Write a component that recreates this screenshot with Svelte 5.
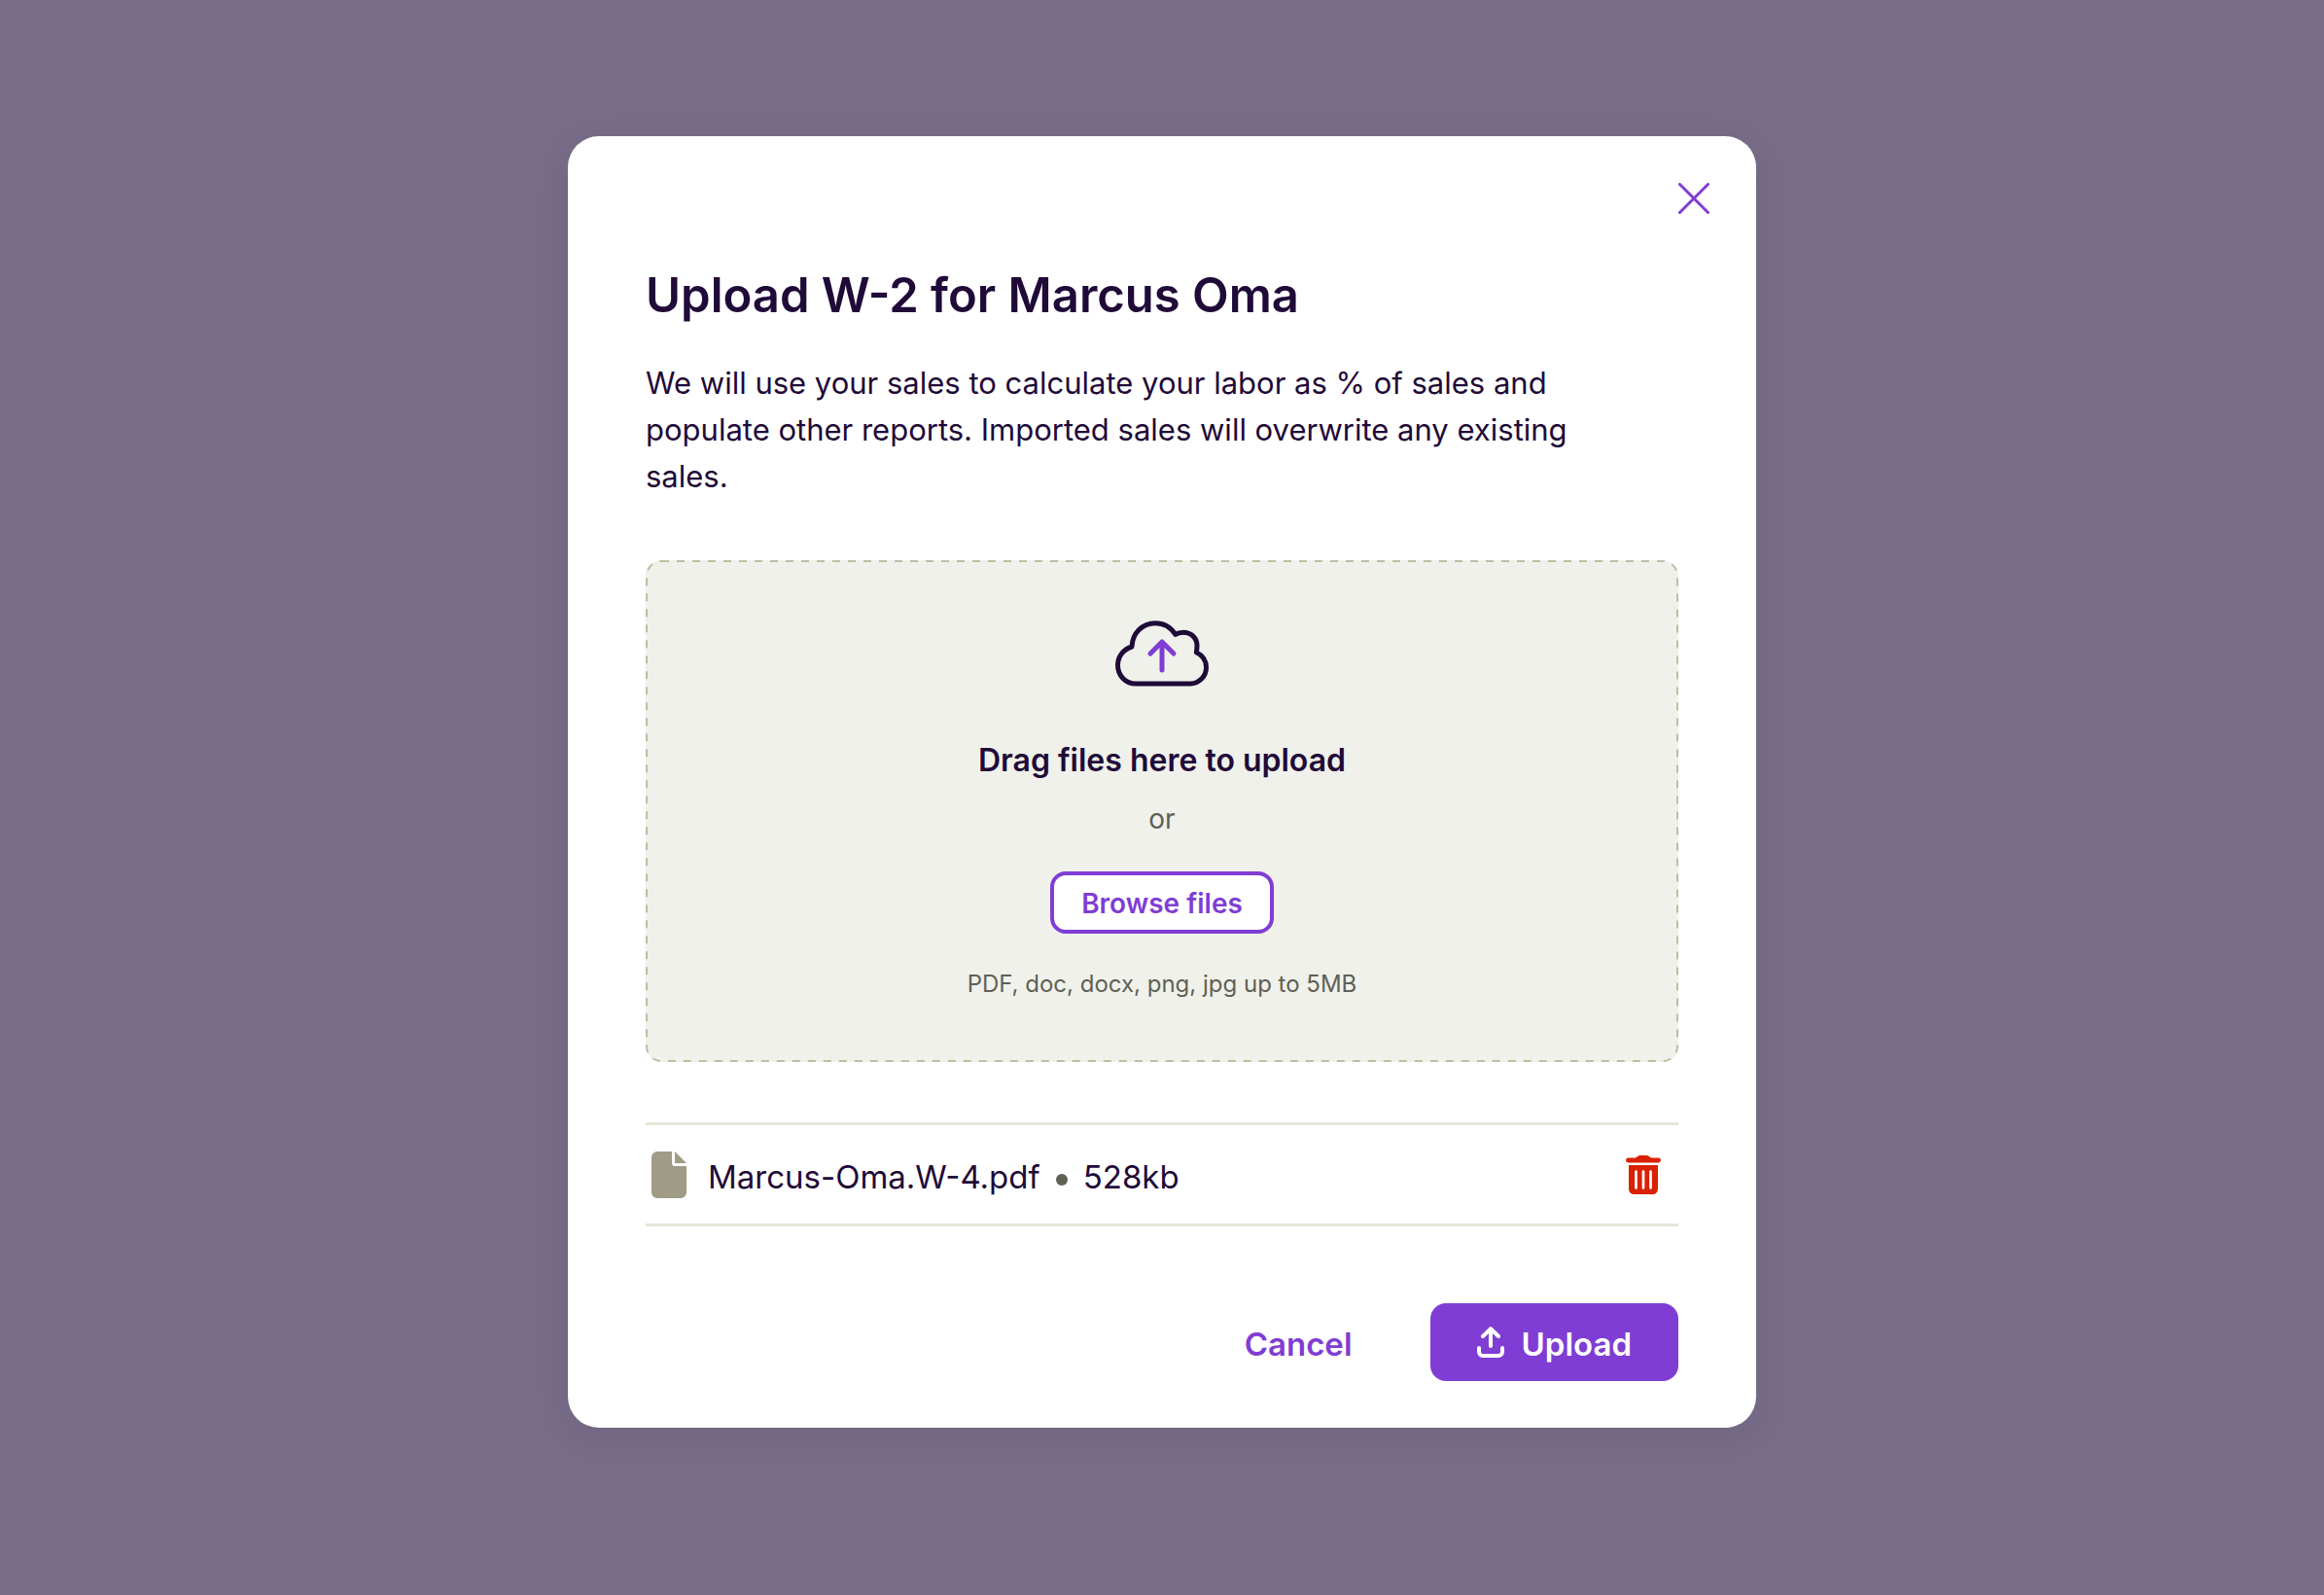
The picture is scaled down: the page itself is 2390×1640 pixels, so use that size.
<script>
  let files = $state([{ name: 'Marcus-Oma.W-4.pdf', size: '528kb' }]);
  let open = $state(true);
  let picker;

  function addFiles(list) {
    for (const f of list) {
      files.push({ name: f.name, size: `${Math.round(f.size / 1024)}kb` });
    }
  }

  function drop(event) {
    event.preventDefault();
    addFiles(event.dataTransfer.files);
  }
</script>

<main class="backdrop">
  {#if open}
    <div class="modal" role="dialog" aria-modal="true" aria-labelledby="title">
      <header class="bar">
        <button class="close" aria-label="Close" onclick={() => (open = false)}>
          <svg width="32" height="32" viewBox="0 0 32 32" fill="none" stroke="currentColor" stroke-width="3" stroke-linecap="round">
            <path d="M1.500 1.500l29 29M30.500 1.500l-29 29" />
          </svg>
        </button>
      </header>

      <div class="content">
        <h1 id="title">Upload W-2 for Marcus Oma</h1>
        <p class="intro">
          We will use your sales to calculate your labor as % of sales and populate other reports. Imported sales will
          overwrite any existing sales.
        </p>

        <section class="dropzone" aria-label="File drop area" ondragover={(e) => e.preventDefault()} ondrop={drop}>
          <svg class="outline" aria-hidden="true">
            <rect class="dashes" x="1" y="1" rx="15" />
          </svg>
          <svg width="96" height="68" viewBox="0 0 96 68" fill="none" stroke-width="5" stroke-linecap="round" stroke-linejoin="round" aria-hidden="true">
            <path
              stroke="#1f0a38"
              d="M21 65C10.500 65 2.500 56.500 2.500 46C2.500 37 8.500 29.500 17 27C17.500 13 28 2.700 41 2.700C50 2.700 57.500 7.500 61.700 14.300C64 12.800 67 12.200 70 12.200C78 12.200 84 18 84 26C84 28.500 83.800 30.500 83.300 32.700C89.500 35.500 93.500 41.500 93.500 48.200C93.500 57.500 86 65 77 65Z"
            />
            <path stroke="#7f3dd4" d="M48 51V22M36 34L48 22L60 34" />
          </svg>
          <h2>Drag files here to upload</h2>
          <span class="or">or</span>
          <button class="browse" onclick={() => picker.click()}>Browse files</button>
          <input
            bind:this={picker}
            type="file"
            multiple
            hidden
            aria-label="Choose files"
            accept=".pdf,.doc,.docx,.png,.jpg"
            onchange={(e) => addFiles(e.currentTarget.files)}
          />
          <small>PDF, doc, docx, png, jpg up to 5MB</small>
        </section>

        <ul class="files">
          {#each files as file, i}
            <li>
              <svg width="36" height="48" viewBox="0 0 36 48" fill="#9f9b87" aria-hidden="true">
                <path d="M6 0H21V12a3 3 0 0 0 3 3H36V42a6 6 0 0 1-6 6H6a6 6 0 0 1-6-6V6a6 6 0 0 1 6-6Z" />
                <path d="M24 0L36 12H24Z" />
              </svg>
              <div class="meta">
                <span>{file.name}</span>
                <span class="dot"></span>
                <span>{file.size}</span>
              </div>
              <button class="remove" aria-label={`Remove ${file.name}`} onclick={() => files.splice(i, 1)}>
                <svg width="36" height="40" viewBox="0 0 36 40" aria-hidden="true">
                  <path
                    fill="currentColor"
                    d="M10 2.600L12.500 .700Q13.500 0 14.500 0H21.500Q22.500 0 23.500 .700L26 2.600H33.500a2.400 2.400 0 0 1 0 4.900H2.500a2.400 2.400 0 0 1 0-4.900ZM3 10H33V34.500a5.500 5.500 0 0 1-5.500 5.500H8.500A5.500 5.500 0 0 1 3 34.500Z"
                  />
                  <path d="M10.500 16.500V33.500M18 16.500V33.500M25.500 16.500V33.500" stroke="#fff" stroke-width="2.700" stroke-linecap="round" />
                </svg>
              </button>
            </li>
          {/each}
        </ul>

        <footer class="actions">
          <button class="cancel" onclick={() => (open = false)}>Cancel</button>
          <button class="upload">
            <svg width="28" height="32" viewBox="0 0 28 32" fill="none" stroke="currentColor" stroke-width="4" stroke-linecap="round" stroke-linejoin="round" aria-hidden="true">
              <path d="M14 20V2.500M6 10L14 2.200L22 10M2 22V26a4 4 0 0 0 4 4H22a4 4 0 0 0 4-4V22" />
            </svg>
            <span>Upload</span>
          </button>
        </footer>
      </div>
    </div>
  {/if}
</main>

<style>
  :global(body) {
    margin: 0;
    background: #786d88;
  }

  .backdrop {
    box-sizing: border-box;
    min-height: 100vh;
    padding: 140px 24px;
    display: flex;
    justify-content: center;
    align-items: flex-start;
    background: #786d88;
    color: #1f0a38;
    font-family: Inter, 'Open Sans', sans-serif;
    font-size: 33px;
    line-height: 48px;
  }

  .modal {
    box-sizing: border-box;
    width: 100%;
    max-width: 1222px;
    padding-bottom: 48px;
    background: #fff;
    border-radius: 32px;
    box-shadow: 0 8px 32px rgba(31, 10, 56, 0.08);
  }

  .bar {
    display: flex;
    justify-content: flex-end;
    padding: 40px 40px 0;
  }

  .content {
    padding: 48px 80px 0;
  }

  button {
    padding: 0;
    border: 0;
    background: none;
    color: #7f3dd4;
    font: inherit;
    font-weight: 600;
    cursor: pointer;
  }

  svg {
    display: block;
    flex: none;
  }

  .close {
    display: grid;
    place-items: center;
    width: 48px;
    height: 48px;
  }

  h1 {
    margin: 0;
    font-size: 49px;
    line-height: 56px;
    font-weight: 600;
  }

  .intro {
    margin: 38px 0 62px;
    padding-right: 24px;
    font-size: 31px;
  }

  .dropzone {
    position: relative;
    display: flex;
    flex-direction: column;
    align-items: center;
    padding: 62px 24px 64px;
    border-radius: 16px;
    background: #f0f1eb;
  }

  .outline {
    position: absolute;
    inset: 0;
    width: 100%;
    height: 100%;
    pointer-events: none;
  }

  .dashes {
    width: calc(100% - 2px);
    height: calc(100% - 2px);
    fill: none;
    stroke: #c0bda0;
    stroke-width: 2px;
    stroke-dasharray: 8 8;
  }

  h2 {
    margin: 52px 0 16px;
    font-size: 32px;
    line-height: 48px;
    font-weight: 600;
  }

  .or {
    color: #606055;
    font-size: 28px;
    line-height: 40px;
  }

  .browse {
    margin: 34px 0 36px;
    padding: 9px 28px 7px;
    border: 4px solid #7f3dd4;
    border-radius: 16px;
    background: #fff;
    font-size: 28px;
    line-height: 40px;
  }

  small {
    color: #606055;
    font-size: 24px;
    line-height: 32px;
  }

  .files {
    margin: 62px 0 0;
    padding: 0;
    list-style: none;
    border-top: 3px solid #e6e5d8;
  }

  li {
    display: flex;
    align-items: center;
    gap: 22px;
    height: 101px;
    padding: 0 12px 0 6px;
    border-bottom: 3px solid #e6e5d8;
  }

  .meta {
    display: flex;
    align-items: center;
    gap: 16px;
    padding-top: 4px;
  }

  .dot {
    width: 12px;
    height: 12px;
    margin-top: 6px;
    border-radius: 50%;
    background: #606055;
  }

  .remove {
    display: grid;
    place-items: center;
    width: 48px;
    height: 48px;
    margin-left: auto;
    color: #d92203;
  }

  .actions {
    display: flex;
    justify-content: flex-end;
    align-items: center;
    gap: 48px;
    margin-top: 79px;
  }

  .cancel {
    padding: 18px 32px 14px;
  }

  .upload {
    display: flex;
    align-items: center;
    gap: 18px;
    padding: 16px 48px;
    border-radius: 16px;
    background: #7f3dd4;
    color: #fff;
  }

  .upload span {
    padding-top: 4px;
    line-height: 44px;
  }
</style>
